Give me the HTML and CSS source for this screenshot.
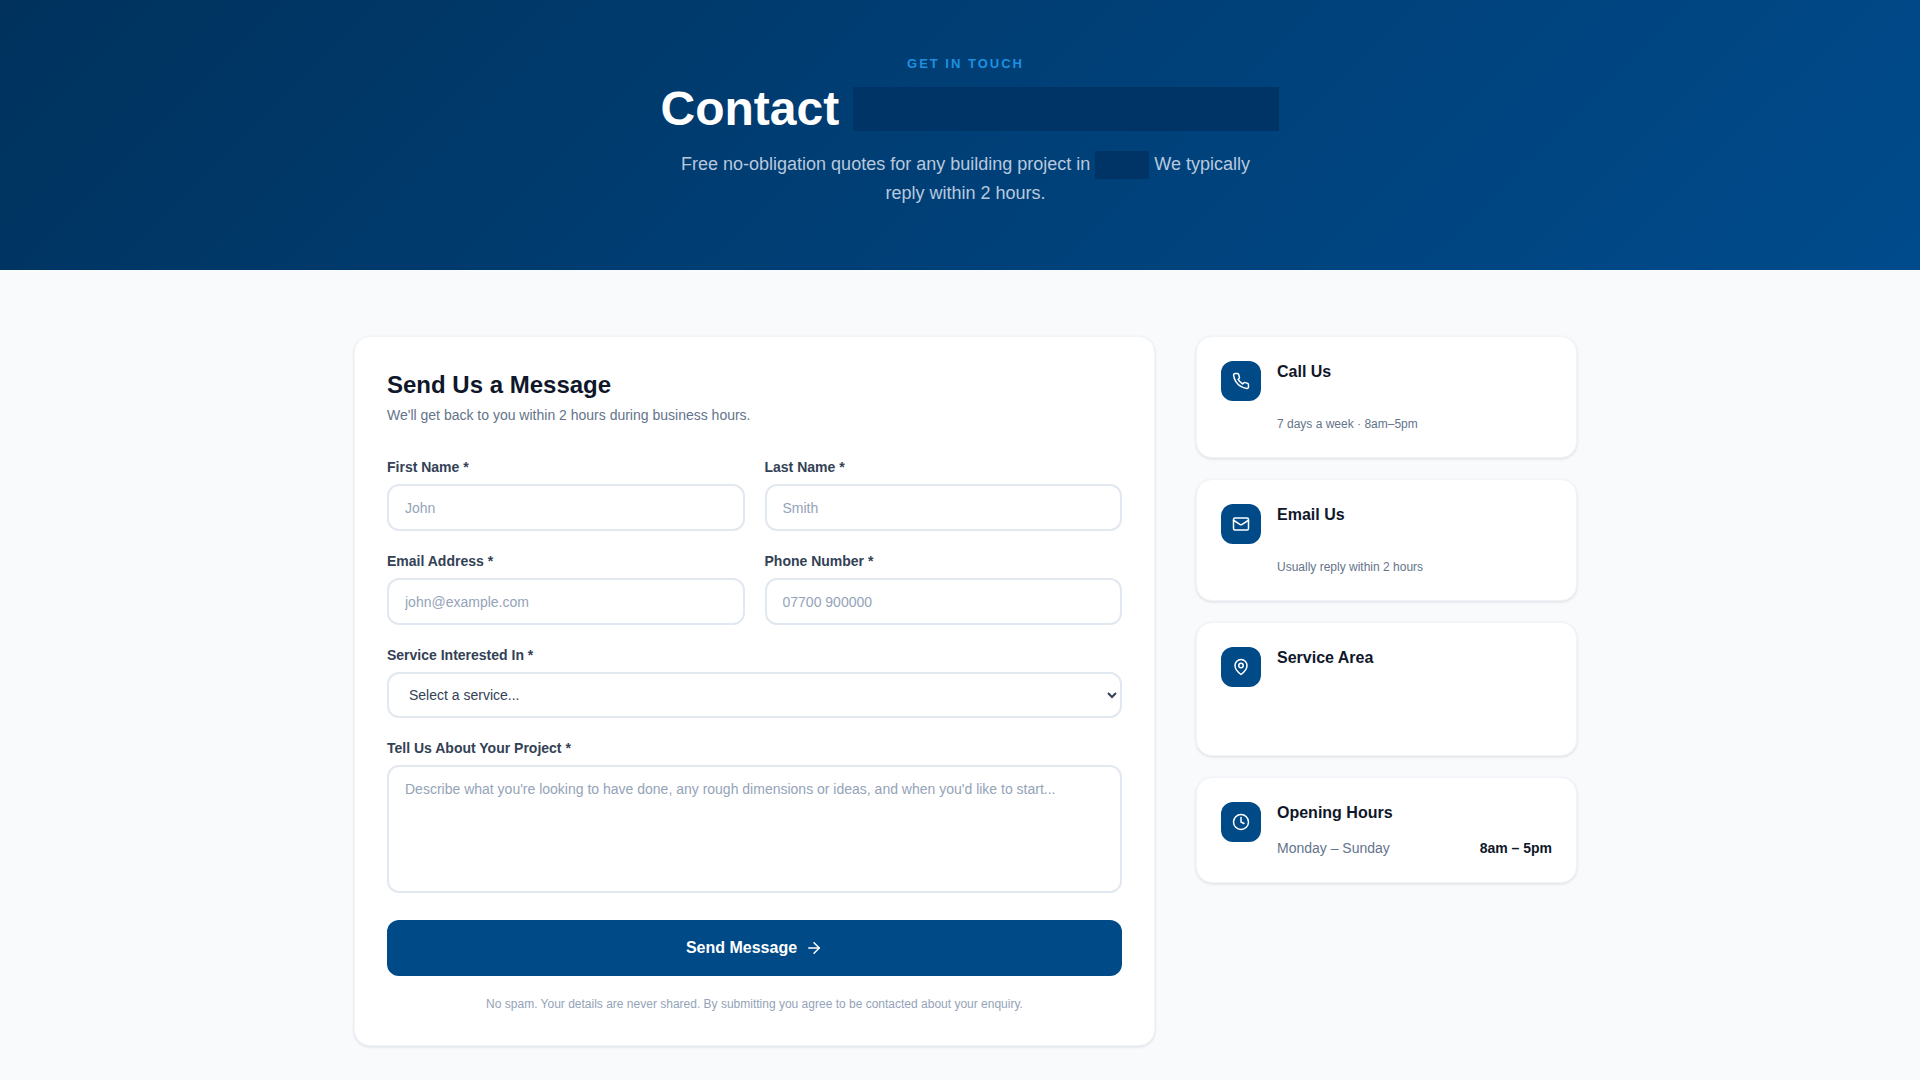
FILE: index.html
```html
<!DOCTYPE html>
<html lang="en">
<head>
    <meta charset="UTF-8">
    <meta name="viewport" content="width=device-width, initial-scale=1.0">
    <title>Contact Us</title>
    <link rel="stylesheet" href="styles.css">
</head>
<body>
    <header class="hero">
        <p class="eyebrow">Get in touch</p>
        <h1>Contact <span class="mask mask-name"></span></h1>
        <p class="lead">Free no-obligation quotes for any building project in <span class="mask mask-area"></span> We typically reply within 2 hours.</p>
    </header>

    <main class="container">
        <form class="card form-card" action="#" method="post">
            <h2>Send Us a Message</h2>
            <p class="form-intro">We'll get back to you within 2 hours during business hours.</p>

            <div class="form-grid">
                <div class="field">
                    <label for="first-name">First Name *</label>
                    <input type="text" id="first-name" name="first-name" placeholder="John" required>
                </div>
                <div class="field">
                    <label for="last-name">Last Name *</label>
                    <input type="text" id="last-name" name="last-name" placeholder="Smith" required>
                </div>
                <div class="field">
                    <label for="email">Email Address *</label>
                    <input type="email" id="email" name="email" placeholder="john@example.com" required>
                </div>
                <div class="field">
                    <label for="phone">Phone Number *</label>
                    <input type="tel" id="phone" name="phone" placeholder="07700 900000" required>
                </div>
                <div class="field full">
                    <label for="service">Service Interested In *</label>
                    <select id="service" name="service" required>
                        <option value="">Select a service...</option>
                    </select>
                </div>
                <div class="field full">
                    <label for="message">Tell Us About Your Project *</label>
                    <textarea id="message" name="message" placeholder="Describe what you're looking to have done, any rough dimensions or ideas, and when you'd like to start..." required></textarea>
                </div>
            </div>

            <button type="submit" class="submit-btn">
                Send Message
                <svg viewBox="0 0 24 24"><path d="M5 12h14"/><path d="m12 5 7 7-7 7"/></svg>
            </button>
            <p class="form-note">No spam. Your details are never shared. By submitting you agree to be contacted about your enquiry.</p>
        </form>

        <aside class="sidebar">
            <section class="card info-card">
                <div class="info-icon">
                    <svg viewBox="0 0 24 24"><path d="M22 16.92v3a2 2 0 0 1-2.18 2 19.79 19.79 0 0 1-8.63-3.07 19.5 19.5 0 0 1-6-6 19.79 19.79 0 0 1-3.07-8.67A2 2 0 0 1 4.11 2h3a2 2 0 0 1 2 1.72 12.84 12.84 0 0 0 .7 2.81 2 2 0 0 1-.45 2.11L8.09 9.91a16 16 0 0 0 6 6l1.27-1.27a2 2 0 0 1 2.11-.45 12.84 12.84 0 0 0 2.81.7A2 2 0 0 1 22 16.92z"/></svg>
                </div>
                <div class="info-body">
                    <h3>Call Us</h3>
                    <p class="info-value"></p>
                    <p class="info-note">7 days a week · 8am–5pm</p>
                </div>
            </section>

            <section class="card info-card">
                <div class="info-icon">
                    <svg viewBox="0 0 24 24"><rect x="2" y="4" width="20" height="16" rx="2"/><path d="m22 7-8.97 5.7a1.94 1.94 0 0 1-2.06 0L2 7"/></svg>
                </div>
                <div class="info-body">
                    <h3>Email Us</h3>
                    <p class="info-value"></p>
                    <p class="info-note">Usually reply within 2 hours</p>
                </div>
            </section>

            <section class="card info-card">
                <div class="info-icon">
                    <svg viewBox="0 0 24 24"><path d="M20 10c0 6-8 12-8 12s-8-6-8-12a8 8 0 0 1 16 0Z"/><circle cx="12" cy="10" r="3"/></svg>
                </div>
                <div class="info-body">
                    <h3>Service Area</h3>
                    <p class="info-area"></p>
                </div>
            </section>

            <section class="card info-card">
                <div class="info-icon">
                    <svg viewBox="0 0 24 24"><circle cx="12" cy="12" r="10"/><path d="M12 6v6l4 2"/></svg>
                </div>
                <div class="info-body">
                    <h3>Opening Hours</h3>
                    <div class="hours-row">
                        <span>Monday – Sunday</span>
                        <strong>8am – 5pm</strong>
                    </div>
                </div>
            </section>
        </aside>
    </main>
</body>
</html>
```
FILE: styles.css
```css
:root {
    --brand: #004a87;
    --brand-dark: #003466;
    --accent: #1e90e0;
    --page: #f8fafc;
    --line: #e2e8f0;
    --ink: #0f172a;
    --label: #334155;
    --muted: #64748b;
    --faint: #94a3b8;
}

* {
    box-sizing: border-box;
    margin: 0;
    padding: 0;
}

body {
    font-family: "Liberation Sans", Arial, sans-serif;
    background-color: var(--page);
    color: var(--ink);
}

.hero {
    padding: 52px 0 63px 11px;
    text-align: center;
    background: linear-gradient(135deg, #00325d 0%, #003f76 50%, #004b8c 100%);
}

.eyebrow {
    font-size: 13px;
    line-height: 24px;
    font-weight: bold;
    letter-spacing: 2px;
    text-transform: uppercase;
    color: var(--accent);
}

h1 {
    margin: 5px 0 13px;
    font-size: 48px;
    line-height: 56px;
    color: #fff;
}

.mask {
    display: inline-block;
    background-color: var(--brand-dark);
}

.mask-name {
    width: 426px;
    height: 44px;
    margin-right: -8px;
    vertical-align: -6px;
}

.mask-area {
    width: 54px;
    height: 28px;
    vertical-align: middle;
}

.lead {
    max-width: 590px;
    margin: 0 auto;
    font-size: 18px;
    line-height: 28px;
    color: #b8c9de;
}

.container {
    display: grid;
    grid-template-columns: minmax(0, 1fr) 381px;
    gap: 41px;
    align-items: start;
    max-width: 1234px;
    margin: 0 auto;
    padding: 66px 0 33px 11px;
}

.card {
    background-color: #fff;
    border: 1px solid #f1f5f9;
    border-radius: 16px;
    box-shadow: 0 1px 3px rgba(15, 23, 42, 0.12);
}

.form-card {
    padding: 32px;
}

h2 {
    margin-bottom: 4px;
    font-size: 24px;
    line-height: 32px;
}

.form-intro {
    margin-bottom: 32px;
    font-size: 14px;
    line-height: 20px;
    color: var(--muted);
}

.form-grid {
    display: grid;
    grid-template-columns: 1fr 1fr;
    gap: 20px;
    margin-bottom: 27px;
}

.field {
    display: flex;
    flex-direction: column;
}

.full {
    grid-column: 1 / -1;
}

label {
    margin-bottom: 7px;
    font-size: 14px;
    line-height: 20px;
    font-weight: bold;
    color: var(--label);
}

input,
select,
textarea {
    width: 100%;
    padding: 12px 16px;
    background-color: #fff;
    border: 2px solid var(--line);
    border-radius: 12px;
    font-family: inherit;
    font-size: 14px;
    line-height: 20px;
    color: var(--label);
}

input {
    height: 47px;
}

select {
    height: 46px;
}

textarea {
    display: block;
    height: 128px;
    resize: none;
}

input::placeholder,
textarea::placeholder {
    color: var(--faint);
}

.submit-btn {
    display: flex;
    justify-content: center;
    align-items: center;
    gap: 8px;
    width: 100%;
    padding: 16px;
    background-color: var(--brand);
    border: none;
    border-radius: 12px;
    font-family: inherit;
    font-size: 16px;
    line-height: 24px;
    font-weight: bold;
    color: #fff;
    cursor: pointer;
}

svg {
    width: 18px;
    height: 18px;
    fill: none;
    stroke: #fff;
    stroke-width: 2;
    stroke-linecap: round;
    stroke-linejoin: round;
}

.form-note {
    margin-top: 19px;
    font-size: 12px;
    line-height: 18px;
    text-align: center;
    color: var(--faint);
}

.sidebar {
    display: grid;
    gap: 21px;
}

.info-card {
    display: flex;
    gap: 16px;
    padding: 24px;
}

.info-icon {
    display: flex;
    flex-shrink: 0;
    justify-content: center;
    align-items: center;
    width: 40px;
    height: 40px;
    background-color: var(--brand);
    border-radius: 12px;
}

.info-body {
    flex: 1;
}

h3 {
    font-size: 16px;
    line-height: 22px;
}

.info-value {
    height: 32px;
}

.info-area {
    height: 62px;
}

.info-note {
    font-size: 12px;
    line-height: 18px;
    color: var(--muted);
}

.hours-row {
    display: flex;
    justify-content: space-between;
    margin-top: 14px;
    font-size: 14px;
    line-height: 20px;
}

.hours-row span {
    color: var(--muted);
}
```
